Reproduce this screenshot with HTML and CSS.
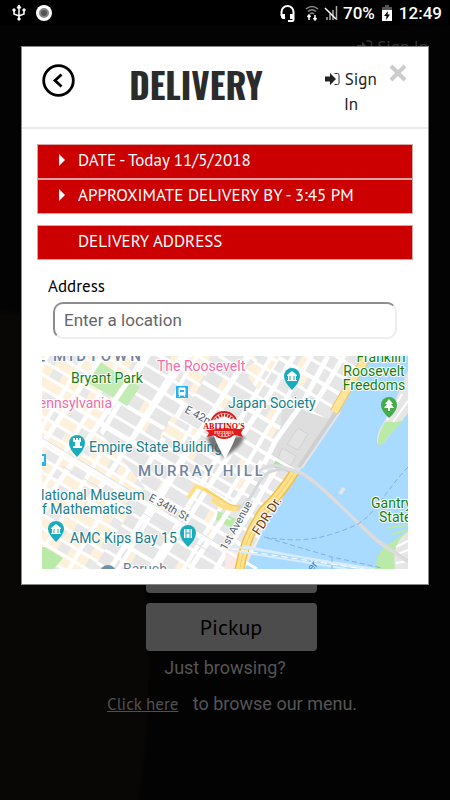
FILE: index.html
```html
<!DOCTYPE html>
<html lang="en">
<head>
    <meta charset="UTF-8">
    <meta name="viewport" content="width=device-width, initial-scale=1.0">
    <title>Delivery</title>
    <link rel="stylesheet" href="styles.css">
</head>
<body>
    <div class="status-bar">
        <svg width="14" height="16" viewBox="0 0 14 16" fill="none" stroke="#fff" stroke-width="1.5">
            <path d="M7 2v12M2 5v4l5 2 5-2V5"/>
            <path d="M7 0l2 3H5zM1 4h2v2H1zM11 4h2v2h-2zM6 13h2v2H6z" fill="#fff" stroke-width="1"/>
        </svg>
        <svg width="16" height="16" viewBox="0 0 16 16">
            <circle cx="8" cy="8" r="8" fill="#fff"/>
            <circle cx="8" cy="8" r="4" fill="#555" stroke="#888" stroke-width="2"/>
        </svg>
        <span class="spacer"></span>
        <svg width="15" height="17" viewBox="0 0 15 17" fill="none" stroke="#fff" stroke-width="2">
            <path d="M1.500 11V7a6 6 0 0 1 12 0v7.500a1.500 1.500 0 0 1-1.500 1.500H8"/>
            <path d="M1 9h4v5H2.500L1 12.500zM10 9h4v5h-4z" fill="#fff" stroke="none"/>
        </svg>
        <svg class="wifi" width="14" height="16" viewBox="0 0 14 16" fill="none" stroke="#888" stroke-width="1.500">
            <path d="M1 4q6-5 12 0M3 6.500q4-3.500 8 0M5 9q2-2 4 0"/>
            <path d="M4 15V10M2.500 12L4 10l1.500 2M10 10v5M8.500 13l1.500 2 1.500-2" stroke="#fff"/>
        </svg>
        <svg width="14" height="16" viewBox="0 0 14 16" fill="none" stroke="#aaa" stroke-width="1.500">
            <path d="M3 12v3M6 9v6M9 5v10M12.500 1v14"/>
            <path d="M1 3l11 11" stroke="#fff"/>
        </svg>
        <span>70%</span>
        <svg class="battery" width="10" height="16" viewBox="0 0 10 16">
            <path d="M3 0h4v2h3v3H0V2h3z" fill="#555"/>
            <path d="M0 5h10v11H0z" fill="#fff"/>
            <path d="M6 6L2 11h2.500L4 15l4-5.500H5.500z" fill="#000"/>
        </svg>
        <span>12:49</span>
    </div>

    <div class="page">
        <header class="page-header">
            <a class="page-signin" href="#">
                <svg width="16" height="14" viewBox="0 0 16 14">
                    <path d="M0 5h5V1.500L10.500 7 5 12.500V9H0z" fill="currentColor"/>
                    <path d="M9.500 1h3A2 2 0 0 1 14.500 3v8a2 2 0 0 1-2 2h-3" fill="none" stroke="currentColor" stroke-width="1.500"/>
                </svg>
                Sign In
            </a>
        </header>
        <main class="landing">
            <button class="order-btn" type="button">Delivery</button>
            <button class="order-btn" type="button">Pickup</button>
            <p class="browse">Just browsing?</p>
            <p class="browse"><a href="#">Click here</a> to browse our menu.</p>
        </main>
    </div>

    <div class="overlay">
        <div class="modal" role="dialog" aria-labelledby="modal-title">
            <div class="modal-header">
                <button class="back" type="button" aria-label="Back">
                    <svg width="33" height="33" viewBox="0 0 33 33" fill="none" stroke="#000">
                        <circle cx="16.500" cy="16.500" r="14.800" stroke-width="2.800"/>
                        <path d="M19.500 10.500l-6.500 6 6.500 6" stroke-width="2.800"/>
                    </svg>
                </button>
                <h1 id="modal-title">DELIVERY</h1>
                <a class="signin" href="#">
                    <svg width="15" height="14" viewBox="0 0 15 14">
                        <path d="M0 4.500h5V1L11 7 5 13V9.500H0z" fill="#222"/>
                        <path d="M9.500 1.500h3A1.500 1.500 0 0 1 14 3v8a1.500 1.500 0 0 1-1.500 1.500h-3" fill="none" stroke="#333"/>
                    </svg>
                    Sign In
                </a>
                <button class="close" type="button" aria-label="Close">
                    <svg width="18" height="18" viewBox="0 0 18 18" stroke="#ccc" stroke-width="4">
                        <path d="M2 2l14 14M16 2L2 16"/>
                    </svg>
                </button>
            </div>

            <div class="modal-body">
                <div class="bars">
                    <button class="bar" type="button"><span class="caret"></span>DATE - Today 11/5/2018</button>
                    <button class="bar" type="button"><span class="caret"></span>APPROXIMATE DELIVERY BY - 3:45 PM</button>
                </div>
                <button class="bar" type="button"><span class="caret hidden"></span>DELIVERY ADDRESS</button>

                <div class="field">
                    <label for="address">Address</label>
                    <input type="text" id="address" placeholder="Enter a location">
                </div>

                <svg class="map" viewBox="0 0 366 213">
                    <defs>
                        <!-- city blocks: streets run 30deg down, avenues across -->
                        <pattern id="blocks" width="56" height="60" patternUnits="userSpaceOnUse" patternTransform="translate(6 4) rotate(31)">
                            <path d="M0 0h56v60H0z" fill="#fff"/>
                            <path d="M2 1h23v11H2zM2 15h23v12H2zM2 30h23v12H2zM2 45h23v12H2zM30 1h24v11H30zM30 15h24v12H30zM30 30h24v12H30zM30 45h24v12H30z" fill="#e6e6e6"/>
                            <path d="M2 1h6v11H2zM48 45h6v12H48z" fill="#fdf1dc"/>
                        </pattern>
                        <pattern id="shops" width="32" height="48" patternUnits="userSpaceOnUse" patternTransform="translate(2 6) rotate(31)">
                            <path d="M0 0h32v48H0z" fill="#fff"/>
                            <path d="M2 1h28v9H2zM2 13h28v9H2zM2 25h28v9H2zM2 37h28v9H2z" fill="#fdf1dc"/>
                            <path d="M12 1h11v9H12zM16 25h14v9H16zM2 37h9v9H2z" fill="#e8e8e8"/>
                        </pattern>
                        <filter id="soft">
                            <feGaussianBlur stdDeviation="1.500"/>
                        </filter>
                    </defs>

                    <path d="M0 0h366v213H0z" fill="url(#blocks)"/>
                    <path d="M0 0h98L0 150zM0 150L55 72l48 60-52 81H0z" fill="url(#shops)"/>
                    <path d="M130 60l26 14-12 20-26-14zM200 14l22-14h16l-22 34zM150 0h26l-30 50-16-8z" fill="url(#shops)"/>

                    <!-- parks and the river side -->
                    <path d="M56 4l10 7 32 20-13 19-42-25z" fill="#c2ecb4"/>
                    <path d="M3 191l18 11-9 11H0v-22z" fill="#b9eaa8"/>
                    <path d="M240 48l20 6 26 9 5-8 5 4-38 53-6 2-25-14 12-30z" fill="#dedede"/>
                    <path d="M256 72l10 6-10 16-11-6zM240 92l14 8-5 10-13-7z" fill="#e3e3e3" stroke="#d2d2d2"/>
                    <path d="M328 0h38v213H203L227 162 261 110 292 57z" fill="#a9daff"/>
                    <path d="M184 187l24 10-7 16h-18z" fill="#fbe9e7"/>
                    <path d="M176 155l18 8-4 9-16-8z" fill="#b9eaa8"/>
                    <path d="M180 159l9 5" stroke="#e9f7e4" stroke-width="2"/>
                    <path d="M234 104l16 9-4 3-16-5z" fill="#a9e69a"/>
                    <path d="M366 14l-10 24-14 28q-8 12-7 20 3 5 7 0l18-21 6-8z" fill="#e6e6e6"/>
                    <path d="M343 66l12 0 7-2-18 19q-3 8-8 5-1-8 7-22z" fill="#b9eaa8"/>
                    <path d="M334 213q0-20 16-27l16-12v39z" fill="#b9eaa8"/>
                    <path d="M366 176q-17 10-13 37h13z" fill="#e6e6e6"/>
                    <path d="M345 172l21-3M350 178l16-4" stroke="#b9eaa8" stroke-width="2"/>
                    <path d="M366 185l-12 6M366 194l-10 4M366 205l-12 2M360 38l-15 26M366 45l-15 21" stroke="#fff" stroke-width="2" fill="none"/>
                    <path d="M298 138l4-6" stroke="#e5e5e5" stroke-width="4"/>

                    <g fill="none">
                        <!-- avenues -->
                        <path d="M-8 100L60 0M4 145L103 0M46 150L145 0M68 213L207 0M113 213L236 25 252 0M148 213L220 105" stroke="#fff" stroke-width="5"/>
                        <path d="M222 108l12-24 26-36L286 0" stroke="#fff" stroke-width="5"/>
                        <path d="M0 32L192 144M0 84l215 129M110 30l144 85" stroke="#fff" stroke-width="3"/>
                        <path d="M0 82q60 35 188 113M20 110l155 90" stroke="#dbe3ea" stroke-width="1"/>
                        <path d="M295 55l-38 56" stroke="#cfcfcf" stroke-width="4"/>
                        <path d="M298 56l-38 56" stroke="#e6e6e6" stroke-width="2"/>
                        <path d="M328 -4q-20 32-36 60" stroke="#efc75e" stroke-width="9"/>
                        <path d="M328 -4q-20 32-36 60" stroke="#ffe49a" stroke-width="7"/>
                        <path d="M253 115q-14 23-31 39-20 28-25 63" stroke="#f2bd47" stroke-width="10"/>
                        <path d="M253 115q-14 23-31 39-20 28-25 63" stroke="#ffe28d" stroke-width="7"/>
                        <path d="M253 115q-14 23-31 39-20 28-25 63" stroke="#f5cd66"/>
                        <path d="M146 142l8-12 10 4 18 12q8 7 17 4M170 143q12 12 28 10" stroke="#ffdf85" stroke-width="4"/>
                        <path d="M162 133l20 12q8 6 16 5" stroke="#f1c860" stroke-width="1"/>
                        <!-- bridge, tunnel and ferry lines -->
                        <path d="M196 154l12-12 12-20q10-12 32-7c20 5 50 41 85 70l29 20" stroke="#d4d8dc" stroke-width="3"/>
                        <path d="M216 116q10-8 22-6l22 7c20 12 45 40 75 68l31 21" stroke="#dcdcdc" stroke-width="3"/>
                        <path d="M190 190l143 23M188 194l117 19M202 190l119 23" stroke="#d8ecfa" stroke-width="2"/>
                        <path d="M366 111c-22 23-32 46-50 57-35 16-58 19-94 13l68 20 50 11M290 201v12" stroke="#7fb2e8" stroke-dasharray="5 3"/>
                        <path d="M190 193l145 22" stroke="#fff" stroke-dasharray="6 4"/>
                    </g>

                    <!-- place pins -->
                    <g fill="#18acbd">
                        <path d="M35 101q-8-8-8-14a8 8 0 0 1 16 0q0 6-8 14z"/>
                        <path d="M250 34q-8-8-8-14a8 8 0 0 1 16 0q0 6-8 14z"/>
                        <path d="M14 186q-8-8-8-13a8 8 0 0 1 16 0q0 5-8 13z"/>
                        <path d="M146 191q-8-8-8-14a8 8 0 0 1 16 0q0 6-8 14z"/>
                    </g>
                    <g fill="#fff">
                        <path d="M31 82h2v2h1v-2h2v2h1v-2h2v4h-1v4h2v2h-9v-2h2v-4h-2z"/>
                        <path d="M245 19l5-4 5 4v1h-1v4h1v1h-10v-1h1v-4h-1z"/>
                        <path d="M9 172l5-4 5 4v1h-1v4h1v1H9v-1h1v-4H9z"/>
                        <path d="M142 173h8v9h-8z"/>
                    </g>
                    <path d="M248 20v4M252 20v4M12 173v4M16 173v4M144 173v9M148 173v9M144 177h4" stroke="#18acbd"/>
                    <path d="M347 62q-8-7-8-13a8 8 0 0 1 16 0q0 6-8 13z" fill="#43ad49"/>
                    <path d="M347 43l4 5h-2l3 4h-4v3h-2v-3h-4l3-4h-2z" fill="#fff"/>
                    <circle cx="66" cy="217" r="8" fill="#6e8fa9"/>
                    <path d="M134 30h12v12h-12zM-8 98H4v12H-8z" fill="#27b2f0"/>
                    <path d="M137 32h6v7h-6zM137 41l1-2M143 41l-1-2" fill="#fff" stroke="#fff"/>
                    <path d="M138 34h4v2h-4z" fill="#27b2f0"/>
                    <path d="M0 100h2v6H0z" fill="#fff"/>

                    <!-- labels -->
                    <g class="map-label">
                        <text class="area" x="11" y="5">MIDTOWN</text>
                        <text class="area" x="-6" y="15">T</text>
                        <text class="area" x="96" y="120">MURRAY HILL</text>
                        <text class="pink" x="115" y="15">The Roosevelt</text>
                        <text class="pink" x="70" y="52" text-anchor="end">ennsylvania</text>
                        <text class="green" x="29" y="27">Bryant Park</text>
                        <text class="green" x="339" y="6" text-anchor="middle">Franklin</text>
                        <text class="green" x="332" y="20" text-anchor="middle">Roosevelt</text>
                        <text class="green" x="332" y="34" text-anchor="middle">Freedoms</text>
                        <text class="green" x="329" y="152">Gantry</text>
                        <text class="green" x="337" y="166">State</text>
                        <text x="186" y="52">Japan Society</text>
                        <text x="47" y="96">Empire State Building</text>
                        <text x="-1" y="144">lational Museum</text>
                        <text x="0" y="158">f Mathematics</text>
                        <text x="28" y="187">AMC Kips Bay 15</text>
                        <text class="area-small" x="81" y="218">Baruch</text>
                        <text class="road" transform="translate(142 56) rotate(28)">E 42nd St</text>
                        <text class="road" transform="translate(106 144) rotate(29)">E 34th St</text>
                        <text class="road" transform="translate(184 195) rotate(-61)">1st Avenue</text>
                        <text class="highway" transform="translate(217 180) rotate(-57)">FDR Dr.</text>
                        <text class="river" transform="translate(270 216) rotate(-50)">er</text>
                    </g>

                    <!-- store marker -->
                    <path d="M165 80q2 14 18 21 16-9 20-21z" fill="#555" opacity="0.8" filter="url(#soft)"/>
                    <path d="M172 80h22q-3 9-11 23-8-14-11-23z" fill="#fff"/>
                    <circle cx="182" cy="69" r="13" fill="#fff" stroke="#e21b1b" stroke-width="2"/>
                    <circle cx="182" cy="69" r="10" fill="none" stroke="#e21b1b" stroke-width="3" stroke-dasharray="2 1"/>
                    <path d="M165 66q17-7 35-1v10h-35z" fill="#fff"/>
                    <path d="M167 74q15-3 30-1l4 0-2 4 2 4q-17-6-36 0l2-4-3-3z" fill="#e21b1b"/>
                    <text class="brand" x="182" y="73" text-anchor="middle">ABITINO'S</text>
                    <text class="brand-sub" x="182" y="78" text-anchor="middle">PIZZERIA</text>
                </svg>
            </div>
        </div>
    </div>
</body>
</html>
```

FILE: styles.css
```css
* {
    box-sizing: border-box;
}
body {
    display: flex;
    flex-direction: column;
    min-height: 100vh;
    margin: 0;
    background-color: #040303;
    font-family: 'PT Sans', 'Noto Sans', sans-serif;
    font-size: 17px;
    color: #000;
}
button {
    padding: 0;
    border: none;
    background: none;
    font-family: inherit;
    cursor: pointer;
}
svg {
    display: block;
    flex: none;
}

/* phone status bar */
.status-bar {
    display: flex;
    align-items: center;
    gap: 5px;
    height: 26px;
    padding: 0 8px 0 12px;
    background-color: #000;
    color: #fff;
    font-family: Roboto, sans-serif;
    font-size: 17px;
    font-weight: 500;
}
.status-bar svg + svg {
    margin-left: 5px;
}
.status-bar .wifi + svg {
    margin-left: 0;
}
.battery {
    margin: 0 2px;
}
.spacer {
    flex: 1;
}

/* dimmed page behind the dialog */
.page {
    display: flex;
    flex: 1;
    flex-direction: column;
    justify-content: space-between;
    background: radial-gradient(ellipse 150px 360px at 0 83%, #080705 98%, #040303 100%);
}
.page-header {
    padding: 10px 22px;
    text-align: right;
}
.page-signin {
    display: inline-flex;
    align-items: center;
    gap: 4px;
    color: #333;
    text-decoration: none;
}
.landing {
    display: flex;
    flex-direction: column;
    align-items: center;
    padding: 0 20px 84px;
}
.order-btn {
    width: 171px;
    height: 48px;
    margin-bottom: 10px;
    margin-left: 12px;
    border-radius: 4px;
    background-color: #4c4c4c;
    font-size: 22px;
    color: #000;
}
.order-btn + .browse {
    margin-top: -5px;
}
.browse {
    margin: 0 0 12px;
    font-family: Roboto, sans-serif;
    font-size: 18px;
    line-height: 24px;
    color: #555;
}
.browse:last-child {
    margin-left: 14px;
    margin-bottom: 0;
}
.browse a {
    margin-right: 10px;
    font-family: 'PT Sans', 'Noto Sans', sans-serif;
    font-size: 17px;
    color: #505050;
}

/* dialog */
.overlay {
    position: absolute;
    top: 46px;
    left: 0;
    width: 100%;
    padding: 0 21px;
}
.modal {
    border: 1px solid #888;
    background-color: #fff;
}
.modal-header {
    display: flex;
    align-items: flex-start;
    height: 82px;
    padding: 17px 21px 0 20px;
    border-bottom: 2px solid #e9e9e9;
}
.modal-header h1 {
    flex: 1;
    margin: 0;
    font-family: Oswald, 'Roboto Condensed', 'Open Sans Condensed', 'Liberation Sans Narrow', 'Liberation Sans', sans-serif;
    font-size: 35px;
    line-height: 40px;
    text-align: center;
    color: #2b2b2b;
}
.signin {
    width: 68px;
    margin-top: 3px;
    font-size: 17px;
    line-height: 25px;
    text-align: center;
    text-decoration: none;
    color: #222;
}
.signin svg {
    display: inline-block;
    vertical-align: -1px;
}
.close {
    margin-left: 4px;
}
.modal-body {
    padding: 15px;
}
.bars {
    margin-bottom: 11px;
}
.bar {
    display: flex;
    align-items: center;
    width: 100%;
    height: 35px;
    padding: 0 0 4px 21px;
    border: 1px solid #d9a5a5;
    background-color: #c00;
    font-size: 17px;
    color: #fff;
}
.caret {
    width: 6px;
    margin-right: 13px;
    border: 6px solid transparent;
    border-right: none;
    border-left-color: #fff;
}
.caret.hidden {
    visibility: hidden;
}
.field {
    display: flex;
    flex-direction: column;
    padding: 14px 16px 17px;
}
.field label {
    margin-left: -5px;
    margin-bottom: 4px;
    line-height: 24px;
}
.field input {
    width: 100%;
    height: 37px;
    padding: 0 9px 2px;
    border: 2px solid;
    border-color: #8d8d8d #ededed #ededed #8d8d8d;
    border-radius: 10px;
    background-color: #fff;
    font-family: Roboto, sans-serif;
    font-size: 17px;
}
.field input::placeholder {
    color: #666;
}

/* map */
.map {
    width: calc(100% - 10px);
    margin: 0 5px;
    overflow: hidden;
}
.map-label {
    font-family: Roboto, sans-serif;
    font-size: 14px;
    fill: #16808e;
    stroke: #fff;
    stroke-width: 2px;
    stroke-linejoin: round;
    paint-order: stroke;
}
.map-label .area {
    font-size: 15px;
    font-weight: 500;
    letter-spacing: 3px;
    fill: #7083a0;
}
.map-label .area-small {
    fill: #687b91;
}
.map-label .pink {
    fill: #f06eaa;
}
.map-label .green {
    fill: #12800f;
}
.map-label .road {
    font-size: 11px;
    fill: #57606a;
}
.map-label .highway {
    font-size: 13px;
    fill: #733c0a;
}
.map-label .river {
    font-size: 11px;
    fill: #4a83c4;
    stroke: none;
}
.brand {
    font-family: 'Liberation Serif', serif;
    font-size: 8px;
    font-weight: bold;
    fill: #d60000;
}
.brand-sub {
    font-family: 'Liberation Serif', serif;
    font-size: 4px;
    font-weight: bold;
    fill: #fff;
}
```
